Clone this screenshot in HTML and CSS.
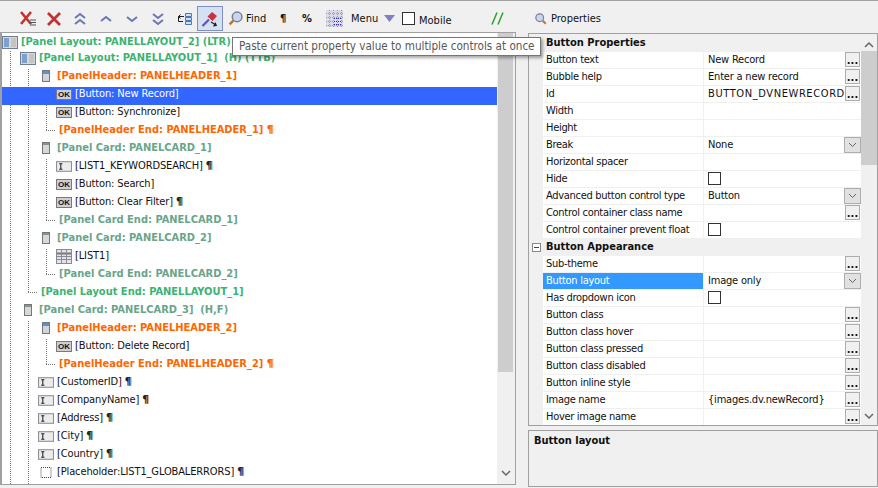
FILE: index.html
```html
<!DOCTYPE html>
<html>
<head>
  <title>Page Designer</title>
  <link rel="stylesheet" href="styles.css">
</head>
<body>
  <svg class="sprites" width="0" height="0">
    <symbol id="i-input" viewBox="0 0 15 10">
      <rect x="0.5" y="0.5" width="14" height="9" fill="#ececec" stroke="#8f8f9c"/>
      <path d="M3 2.500h3M3 7.500h3M4.500 2.500v5" stroke="#222" fill="none"/>
    </symbol>
    <symbol id="i-layout" viewBox="0 0 16 13">
      <rect x="0.5" y="0.5" width="15" height="12" fill="#d8d8d8" stroke="#6f7f90"/>
      <rect x="2" y="2" width="5" height="9" fill="#7da0cc"/>
      <rect x="9" y="2" width="5" height="9" fill="#c4c4c4"/>
    </symbol>
    <symbol id="i-header" viewBox="0 0 8 12">
      <rect x="0.5" y="0.5" width="7" height="11" fill="#d4d4d4" stroke="#6f7a86"/>
      <rect x="1" y="1" width="6" height="3" fill="#5f8fd0"/>
    </symbol>
    <symbol id="i-card" viewBox="0 0 8 12">
      <rect x="0.5" y="0.5" width="7" height="11" fill="#d8d8d8" stroke="#6f7a76"/>
      <rect x="1" y="1" width="6" height="2" fill="#909090"/>
    </symbol>
    <symbol id="i-list" viewBox="0 0 16 15">
      <rect x="0.5" y="0.5" width="15" height="14" fill="#e4e4e8" stroke="#8a8a96"/>
      <path d="M1 4.500h14" stroke="#777" stroke-width="2"/>
      <path d="M1 7.500h14M1 10.500h14M5.500 1v13M10.500 1v13" stroke="#8a8a96"/>
    </symbol>
    <symbol id="i-hole" viewBox="0 0 11 11">
      <rect x="0.5" y="0.5" width="10" height="10" fill="none" stroke="#444" stroke-dasharray="1 1"/>
    </symbol>
    <symbol id="i-glass" viewBox="0 0 14 14">
      <circle cx="8.500" cy="5.500" r="4.500" fill="#c9d6ee" stroke="#7a7f96" stroke-width="1.400"/>
      <path d="M5 9l-3.500 3.500" stroke="#b5793c" stroke-width="2.400"/>
    </symbol>
  </svg>

  <div class="toolbar">
    <span class="tool">
      <svg width="18" height="18" viewBox="0 0 18 18"><path d="M2 2l10 12M12 2L2 14" stroke="#c23232" stroke-width="2.600" fill="none"/><path d="M11 10h6M11 12.500h6M11 15h6" stroke="#555" fill="none"/></svg>
    </span>
    <span class="tool">
      <svg width="16" height="16" viewBox="0 0 16 16"><path d="M2 2l12 12M14 2L2 14" stroke="#c23232" stroke-width="2.800" fill="none"/></svg>
    </span>
    <span class="tool">
      <svg width="12" height="14" viewBox="0 0 12 14"><path d="M1 6l5-4 5 4M1 12l5-4 5 4" stroke="#6d74b8" stroke-width="2" fill="none"/></svg>
    </span>
    <span class="tool">
      <svg width="12" height="8" viewBox="0 0 12 8"><path d="M1 6l5-4 5 4" stroke="#6d74b8" stroke-width="2" fill="none"/></svg>
    </span>
    <span class="tool">
      <svg width="12" height="8" viewBox="0 0 12 8"><path d="M1 2l5 4 5-4" stroke="#6d74b8" stroke-width="2" fill="none"/></svg>
    </span>
    <span class="tool">
      <svg width="12" height="14" viewBox="0 0 12 14"><path d="M1 2l5 4 5-4M1 8l5 4 5-4" stroke="#6d74b8" stroke-width="2" fill="none"/></svg>
    </span>
    <span class="tool">
      <svg width="15" height="14" viewBox="0 0 15 14"><path d="M8.500 1.500h6v3h-6zM8.500 5.500h6v3h-6zM8.500 9.500h6v3h-6z" fill="#cfe0f5" stroke="#4a78b5"/><path d="M7 4.500H1.500M3.500 2.500l-2 2 2 2M1.500 4.500v5H6" stroke="#222" fill="none"/></svg>
    </span>
    <span class="tool tool-on">
      <svg width="18" height="18" viewBox="0 0 18 18"><path d="M1.500 16L8 9.500" stroke="#5a4fc0" stroke-width="2.200"/><path d="M6.500 6.500L11 2l5 4-4.500 5z" fill="#c8323c"/><path d="M10 12l5 3" stroke="#222" stroke-width="1.300"/><path d="M12 16.500l4-.5-1.500-4z" fill="#222"/></svg>
    </span>
    <span class="tool-find">
      <svg width="15" height="15"><use href="#i-glass"/></svg>
      Find
    </span>
    <span class="tool-para">¶</span>
    <span class="tool-pct">%</span>
    <svg class="tool-grid" width="17" height="17" viewBox="0 0 17 17"><rect width="17" height="17" fill="#dcdce8"/><path d="M0 3.500h17M0 7.500h17M0 11.500h17M0 15.500h17M3.500 0v17M7.500 0v17M11.500 0v17M15.500 0v17" stroke="#9a9ab8" stroke-dasharray="1 1"/><path d="M8 8.500h8M8 11.500h8M8 14.500h8" stroke="#3333aa" stroke-dasharray="1 1"/></svg>
    <span class="tool-menu">Menu</span>
    <svg class="tool-arrow" width="11" height="7" viewBox="0 0 11 7"><path d="M0 0h11L5.500 7z" fill="#7f7fc4"/></svg>
    <span class="check check-mobile"></span>
    <span class="tool-mobile">Mobile</span>
    <span class="tool-slashes">
      <svg width="13" height="13" viewBox="0 0 13 13"><path d="M1 12.500L6 .5M7 12.500L12 .5" stroke="#2fa02f" stroke-width="1.500" fill="none"/></svg>
    </span>
    <span class="tool-props">
      <svg width="12" height="12" viewBox="0 0 14 14"><g transform="translate(14,0) scale(-1,1)"><use href="#i-glass"/></g></svg>
      Properties
    </span>
  </div>

  <div class="tooltip">Paste current property value to multiple controls at once</div>

  <div class="main">
    <div class="tree">
      <div class="tree-rows">
        <div class="row row-first layout"><svg class="ico-wide"><use href="#i-layout"/></svg><span class="lbl">[Panel Layout: PANELLAYOUT_2] (LTR)</span></div>
        <div class="row layout"><i class="g"></i><svg class="ico-wide"><use href="#i-layout"/></svg><span class="lbl">[Panel Layout: PANELLAYOUT_1]&nbsp; (H) (TTB)</span></div>
        <div class="row header"><i class="g"></i><i class="g"></i><svg class="ico-thin"><use href="#i-header"/></svg><span class="lbl">[PanelHeader: PANELHEADER_1]</span></div>
        <div class="row plain selected"><i class="g"></i><i class="g"></i><i class="g"></i><span class="ico-ok">OK</span><span class="lbl">[Button: New Record]</span></div>
        <div class="row plain"><i class="g"></i><i class="g"></i><i class="g"></i><span class="ico-ok">OK</span><span class="lbl">[Button: Synchronize]</span></div>
        <div class="row header"><i class="g"></i><i class="g"></i><i class="e"></i><span class="lbl lbl-end">[PanelHeader End: PANELHEADER_1] <b class="para para-o">¶</b></span></div>
        <div class="row card"><i class="g"></i><i class="g"></i><svg class="ico-thin"><use href="#i-card"/></svg><span class="lbl">[Panel Card: PANELCARD_1]</span></div>
        <div class="row plain"><i class="g"></i><i class="g"></i><i class="g"></i><svg class="ico-btn"><use href="#i-input"/></svg><span class="lbl">[LIST1_KEYWORDSEARCH] <b class="para">¶</b></span></div>
        <div class="row plain"><i class="g"></i><i class="g"></i><i class="g"></i><span class="ico-ok">OK</span><span class="lbl">[Button: Search]</span></div>
        <div class="row plain"><i class="g"></i><i class="g"></i><i class="g"></i><span class="ico-ok">OK</span><span class="lbl">[Button: Clear Filter] <b class="para">¶</b></span></div>
        <div class="row card"><i class="g"></i><i class="g"></i><i class="e"></i><span class="lbl lbl-end">[Panel Card End: PANELCARD_1]</span></div>
        <div class="row card"><i class="g"></i><i class="g"></i><svg class="ico-thin"><use href="#i-card"/></svg><span class="lbl">[Panel Card: PANELCARD_2]</span></div>
        <div class="row plain"><i class="g"></i><i class="g"></i><i class="g"></i><svg class="ico-btn ico-tall"><use href="#i-list"/></svg><span class="lbl">[LIST1]</span></div>
        <div class="row card"><i class="g"></i><i class="g"></i><i class="e"></i><span class="lbl lbl-end">[Panel Card End: PANELCARD_2]</span></div>
        <div class="row layout"><i class="g"></i><i class="e"></i><span class="lbl lbl-end">[Panel Layout End: PANELLAYOUT_1]</span></div>
        <div class="row card"><i class="g"></i><svg class="ico-thin"><use href="#i-card"/></svg><span class="lbl">[Panel Card: PANELCARD_3]&nbsp; (H,F)</span></div>
        <div class="row header"><i class="g"></i><i class="g"></i><svg class="ico-thin"><use href="#i-header"/></svg><span class="lbl">[PanelHeader: PANELHEADER_2]</span></div>
        <div class="row plain"><i class="g"></i><i class="g"></i><i class="g"></i><span class="ico-ok">OK</span><span class="lbl">[Button: Delete Record]</span></div>
        <div class="row header"><i class="g"></i><i class="g"></i><i class="e"></i><span class="lbl lbl-end">[PanelHeader End: PANELHEADER_2] <b class="para para-o">¶</b></span></div>
        <div class="row plain"><i class="g"></i><i class="g"></i><svg class="ico-btn"><use href="#i-input"/></svg><span class="lbl">[CustomerID] <b class="para">¶</b></span></div>
        <div class="row plain"><i class="g"></i><i class="g"></i><svg class="ico-btn"><use href="#i-input"/></svg><span class="lbl">[CompanyName] <b class="para para-b">¶</b></span></div>
        <div class="row plain"><i class="g"></i><i class="g"></i><svg class="ico-btn"><use href="#i-input"/></svg><span class="lbl">[Address] <b class="para">¶</b></span></div>
        <div class="row plain"><i class="g"></i><i class="g"></i><svg class="ico-btn"><use href="#i-input"/></svg><span class="lbl">[City] <b class="para">¶</b></span></div>
        <div class="row plain"><i class="g"></i><i class="g"></i><svg class="ico-btn"><use href="#i-input"/></svg><span class="lbl">[Country] <b class="para">¶</b></span></div>
        <div class="row plain"><i class="g"></i><i class="g"></i><svg class="ico-btn"><use href="#i-hole"/></svg><span class="lbl">[Placeholder:LIST1_GLOBALERRORS] <b class="para">¶</b></span></div>
        <div class="row plain"><i class="g"></i><i class="g"></i></div>
      </div>
      <div class="vscroll tree-scroll">
        <div class="thumb"></div>
        <svg class="scroll-down" width="10" height="7" viewBox="0 0 10 7"><path d="M1 1l4 4 4-4" stroke="#666" stroke-width="1.500" fill="none"/></svg>
      </div>
    </div>

    <div class="side">
      <div class="grid">
        <div class="grid-rows">
          <div class="prop group"><span class="gutter"></span><span class="name">Button Properties</span></div>
          <div class="prop"><span class="gutter"></span><span class="name">Button text</span><span class="val">New Record</span><span class="more">...</span></div>
          <div class="prop"><span class="gutter"></span><span class="name">Bubble help</span><span class="val">Enter a new record</span><span class="more">...</span></div>
          <div class="prop"><span class="gutter"></span><span class="name">Id</span><span class="val val-id">BUTTON_DVNEWRECORD</span><span class="more">...</span></div>
          <div class="prop"><span class="gutter"></span><span class="name">Width</span><span class="val"></span></div>
          <div class="prop"><span class="gutter"></span><span class="name">Height</span><span class="val"></span></div>
          <div class="prop"><span class="gutter"></span><span class="name">Break</span><span class="val">None</span><span class="drop"><svg width="9" height="6" viewBox="0 0 9 6"><path d="M1 1l3.500 3.500L8 1" stroke="#666" fill="none"/></svg></span></div>
          <div class="prop"><span class="gutter"></span><span class="name">Horizontal spacer</span><span class="val"></span></div>
          <div class="prop"><span class="gutter"></span><span class="name">Hide</span><span class="val"><span class="check"></span></span></div>
          <div class="prop"><span class="gutter"></span><span class="name">Advanced button control type</span><span class="val">Button</span><span class="drop"><svg width="9" height="6" viewBox="0 0 9 6"><path d="M1 1l3.500 3.500L8 1" stroke="#666" fill="none"/></svg></span></div>
          <div class="prop"><span class="gutter"></span><span class="name">Control container class name</span><span class="val"></span><span class="more">...</span></div>
          <div class="prop"><span class="gutter"></span><span class="name">Control container prevent float</span><span class="val"><span class="check"></span></span></div>
          <div class="prop group"><span class="gutter"><span class="minus"></span></span><span class="name">Button Appearance</span></div>
          <div class="prop"><span class="gutter"></span><span class="name">Sub-theme</span><span class="val"></span><span class="more">...</span></div>
          <div class="prop prop-on"><span class="gutter"></span><span class="name">Button layout</span><span class="val">Image only</span><span class="drop"><svg width="9" height="6" viewBox="0 0 9 6"><path d="M1 1l3.500 3.500L8 1" stroke="#666" fill="none"/></svg></span></div>
          <div class="prop"><span class="gutter"></span><span class="name">Has dropdown icon</span><span class="val"><span class="check"></span></span></div>
          <div class="prop"><span class="gutter"></span><span class="name">Button class</span><span class="val"></span><span class="more">...</span></div>
          <div class="prop"><span class="gutter"></span><span class="name">Button class hover</span><span class="val"></span><span class="more">...</span></div>
          <div class="prop"><span class="gutter"></span><span class="name">Button class pressed</span><span class="val"></span><span class="more">...</span></div>
          <div class="prop"><span class="gutter"></span><span class="name">Button class disabled</span><span class="val"></span><span class="more">...</span></div>
          <div class="prop"><span class="gutter"></span><span class="name">Button inline style</span><span class="val"></span><span class="more">...</span></div>
          <div class="prop"><span class="gutter"></span><span class="name">Image name</span><span class="val">{images.dv.newRecord}</span><span class="more">...</span></div>
          <div class="prop"><span class="gutter"></span><span class="name">Hover image name</span><span class="val"></span><span class="more">...</span></div>
        </div>
        <div class="vscroll grid-scroll">
          <svg class="scroll-up" width="10" height="7" viewBox="0 0 10 7"><path d="M1 6l4-4 4 4" stroke="#666" stroke-width="1.500" fill="none"/></svg>
          <div class="thumb"></div>
          <svg class="scroll-down" width="10" height="7" viewBox="0 0 10 7"><path d="M1 1l4 4 4-4" stroke="#666" stroke-width="1.500" fill="none"/></svg>
        </div>
      </div>
      <div class="desc">Button layout</div>
    </div>
  </div>
</body>
</html>
```
FILE: styles.css
```css
html, body {
  margin: 0;
  height: 100%;
  overflow: hidden;
}

body {
  background-color: #f0f0f0;
  color: #111;
  font-family: "DejaVu Sans", sans-serif;
  font-stretch: condensed;
  font-size: 11px;
  position: relative;
}

.sprites {
  display: none;
}

/* toolbar */
.toolbar {
  display: flex;
  align-items: center;
  height: 32px;
  padding: 4px 0 0 15px;
  border-top: 1px solid #a0a0a0;
  box-sizing: border-box;
}

.tool {
  display: flex;
  align-items: center;
  justify-content: center;
  width: 26px;
  height: 25px;
  box-sizing: border-box;
}

.tool-on {
  background-color: #d5e1f2;
  border: 1px solid #7d8fc4;
}

.tool-find {
  display: flex;
  align-items: center;
  gap: 3px;
  margin-left: 5px;
  width: 51px;
}

.tool-para {
  font-weight: bold;
  margin-left: 1px;
  width: 22px;
}

.tool-pct {
  font-weight: bold;
  width: 24px;
}

.tool-grid {
  margin-right: 8px;
}

.tool-menu {
  width: 33px;
}

.tool-arrow {
  margin-right: 7px;
}

.check {
  display: block;
  width: 13px;
  height: 13px;
  background-color: white;
  border: 1px solid #333;
  box-sizing: border-box;
}

.check-mobile {
  margin-right: 4px;
}

.tool-mobile {
  width: 72px;
  margin-top: 3px;
}

.tool-slashes {
  display: flex;
  width: 44px;
}

.tool-props {
  display: flex;
  align-items: center;
  gap: 4px;
}

.tooltip {
  position: absolute;
  left: 232px;
  top: 37px;
  width: 309px;
  height: 19px;
  line-height: 17px;
  box-sizing: border-box;
  padding-left: 6px;
  background-color: white;
  border: 1px solid #767676;
  box-shadow: 2px 2px 3px rgba(0, 0, 0, 0.35);
  color: #575757;
  font-size: 11.6px;
  white-space: nowrap;
  z-index: 5;
}

/* layout */
.main {
  display: flex;
  gap: 12px;
  height: 456px;
}

.tree {
  display: flex;
  width: 516px;
  height: 453px;
  box-sizing: border-box;
  border: 1px solid #a0a0a0;
  border-left-width: 2px;
}

/* tree */
.tree-rows {
  width: 495px;
  overflow: hidden;
  padding-top: 2px;
  background-color: white;
}

.row {
  display: flex;
  height: 18px;
  white-space: nowrap;
}

.row-first {
  height: 16px;
}

.lbl {
  line-height: 14px;
  margin-left: 1px;
}

.lbl-end {
  margin-left: 3px;
}

.plain .lbl {
  letter-spacing: -0.13px;
}

.layout .lbl {
  color: #3cb371;
  font-weight: bold;
}

.card .lbl {
  color: #6aa58a;
  font-weight: bold;
}

.header .lbl {
  color: #ff6600;
  font-weight: bold;
}

.selected {
  background-color: #3366ff;
}

.selected .lbl {
  color: white;
}

.selected .g {
  background: none;
}

.para {
  color: #222;
  text-shadow: 1px 0 #4f9be0;
}

.para-o {
  color: #ff6600;
  text-shadow: 1px 0 #ff9a50;
}

.para-b {
  text-shadow: 1px 0 #e08a30;
}

/* indent guide */
.g {
  display: block;
  width: 18px;
  flex: none;
  background: repeating-linear-gradient(to bottom, #777 0 1px, transparent 1px 2px) 8px 0 / 1px 100% no-repeat;
}

/* end of a branch */
.e {
  display: block;
  width: 18px;
  flex: none;
  background:
    repeating-linear-gradient(to bottom, #777 0 1px, transparent 1px 2px) 8px 0 / 1px 8px no-repeat,
    repeating-linear-gradient(to right, #777 0 1px, transparent 1px 2px) 8px 7px / 10px 1px no-repeat;
}

.ico-wide {
  width: 16px;
  height: 13px;
  margin: 1px 2px 0 0;
  flex: none;
}

.ico-thin {
  width: 8px;
  height: 12px;
  margin: 1px 6px 0 4px;
  flex: none;
}

.ico-btn {
  width: 16px;
  height: 11px;
  margin: 2px 2px 0 0;
  flex: none;
}

.ico-tall {
  height: 15px;
  margin-top: 0;
}

.ico-ok {
  width: 16px;
  height: 11px;
  margin: 2px 2px 0 0;
  flex: none;
  box-sizing: border-box;
  border: 1px solid #77778a;
  background-color: #d0d0d4;
  color: #111;
  font-family: "Liberation Sans", sans-serif;
  font-size: 8px;
  font-weight: bold;
  line-height: 9px;
  text-align: center;
}

/* scrollbars */
.vscroll {
  position: relative;
  width: 15px;
  flex: none;
}

.tree-scroll {
  margin-left: 1px;
}

.tree-scroll .thumb {
  height: 339px;
  background-color: #cdcdcd;
}

.scroll-up {
  position: absolute;
  left: 3px;
  top: 7px;
}

.scroll-down {
  position: absolute;
  left: 3px;
  bottom: 7px;
}

.grid-scroll {
  width: 16px;
}

.grid-scroll .scroll-down {
  bottom: 5px;
}

.grid-scroll .thumb {
  margin-top: 17px;
  height: 114px;
  background-color: #cdcdcd;
}

/* properties */
.side {
  width: 350px;
  flex: none;
}

.grid {
  display: flex;
  height: 393px;
  margin-top: 1px;
  box-sizing: border-box;
  border: 1px solid #a0a0a0;
  overflow: hidden;
}

.grid-rows {
  width: 332px;
  padding-top: 1px;
}

.prop {
  display: flex;
  height: 17px;
  line-height: 16px;
  background-color: white;
  box-sizing: border-box;
  border-bottom: 1px solid #f0f0f0;
}

.gutter {
  display: flex;
  align-items: center;
  justify-content: center;
  width: 14px;
  flex: none;
  background-color: #f0f0f0;
}

.minus {
  display: block;
  width: 9px;
  height: 9px;
  box-sizing: border-box;
  border: 1px solid #888;
  background: linear-gradient(#444, #444) center / 5px 1px no-repeat white;
}

.name {
  width: 161px;
  padding-left: 3px;
  box-sizing: border-box;
  flex: none;
  border-right: 1px solid #f0f0f0;
  letter-spacing: -0.3px;
  white-space: nowrap;
}

.val {
  flex: 1;
  min-width: 0;
  padding-left: 4px;
  letter-spacing: -0.2px;
  white-space: nowrap;
  overflow: hidden;
}

.val-id {
  letter-spacing: 0.6px;
}

.val .check {
  margin-top: 1px;
}

.group {
  background-color: #f0f0f0;
  border-bottom: none;
}

.group .name {
  font-weight: bold;
  border-right: none;
  letter-spacing: 0;
}

.prop-on .name {
  background-color: #3399ff;
  color: white;
}

.more {
  width: 15px;
  height: 15px;
  margin-right: 1px;
  flex: none;
  box-sizing: border-box;
  border: 1px solid #adadad;
  background-color: #f0f0f0;
  font-weight: bold;
  line-height: 15px;
  text-align: center;
}

.drop {
  display: flex;
  align-items: center;
  justify-content: center;
  width: 17px;
  height: 16px;
  flex: none;
  box-sizing: border-box;
  border: 1px solid #adadad;
  background-color: #e1e1e1;
}

.desc {
  height: 57px;
  margin-top: 4px;
  padding: 3px 5px;
  box-sizing: border-box;
  border: 1px solid #a0a0a0;
  font-weight: bold;
}
```
